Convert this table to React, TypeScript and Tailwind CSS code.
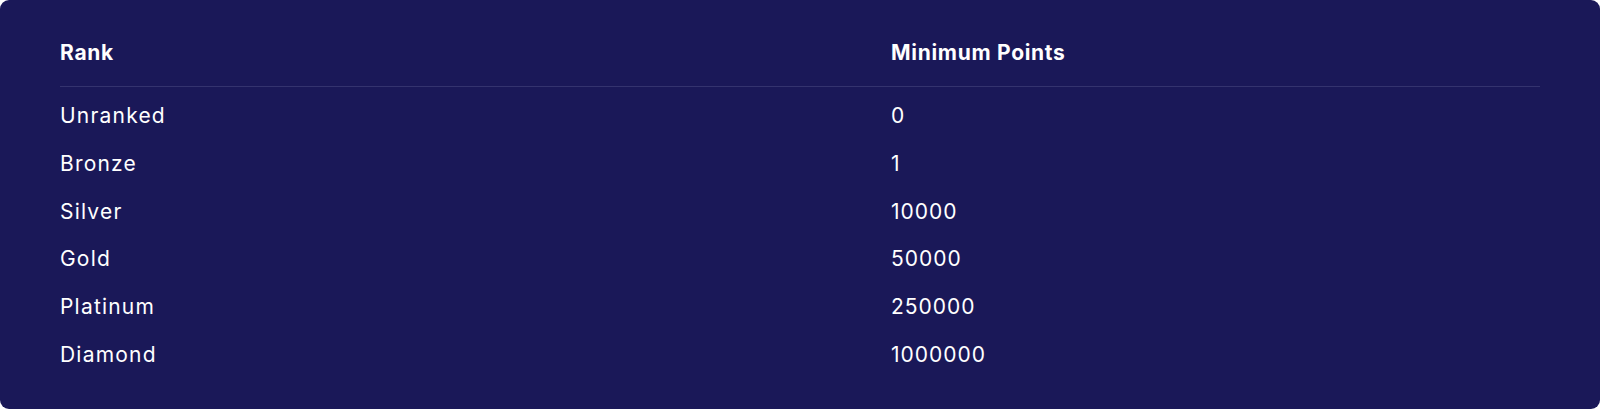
const ranks = [
  { name: 'Unranked', points: '0' },
  { name: 'Bronze', points: '1' },
  { name: 'Silver', points: '10000' },
  { name: 'Gold', points: '50000' },
  { name: 'Platinum', points: '250000' },
  { name: 'Diamond', points: '1000000' },
];

export default function App() {
  return (
    <div className="bg-white w-[1600px] h-[409px]">
      <div
        className="h-[409px] rounded-[9px] bg-[#1a1858] px-[60px] pt-[29px] text-white"
        style={{ fontFamily: 'Inter, "Open Sans", sans-serif' }}
      >
        <div className="grid grid-cols-[831px_1fr] border-b border-[#34336e] pb-[9px] text-[21px] font-bold leading-[48px] tracking-[0.7px]">
          <div>Rank</div>
          <div>Minimum Points</div>
        </div>
        <div className="pt-[5px]">
          {ranks.map((rank) => (
            <div key={rank.name} className="grid grid-cols-[831px_1fr] text-[21px] leading-[47.75px]">
              <div className="tracking-[1.2px]">{rank.name}</div>
              <div className="tracking-[1px]">{rank.points}</div>
            </div>
          ))}
        </div>
      </div>
    </div>
  );
}
